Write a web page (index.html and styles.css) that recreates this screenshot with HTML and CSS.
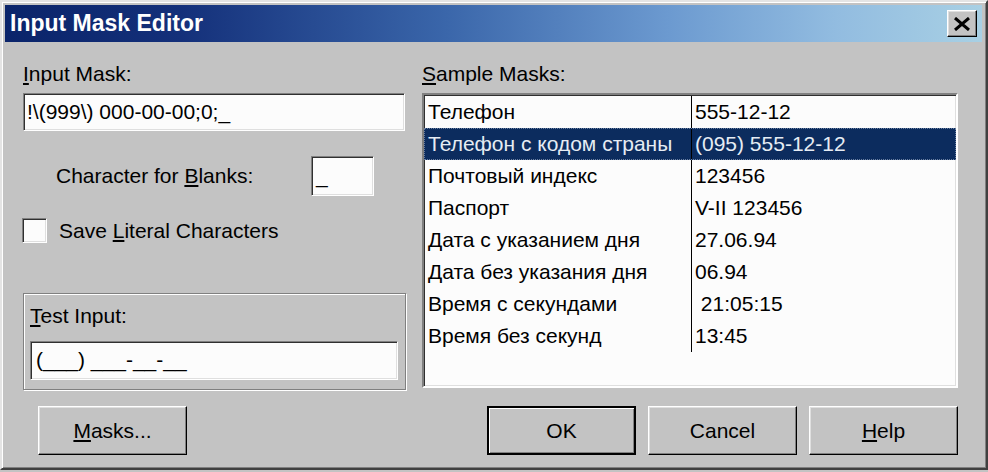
FILE: index.html
```html
<!DOCTYPE html>
<html>
<head>
<meta charset="utf-8">
<link rel="stylesheet" href="styles.css">
</head>
<body>
<div class="window">
  <div class="titlebar">
    <span class="title">Input Mask Editor</span>
    <button class="close" aria-label="Close">
      <svg width="18" height="14" viewBox="0 0 18 14"><path d="M2 1 L16 13 M16 1 L2 13" stroke="#000" stroke-width="3" fill="none"/></svg>
    </button>
  </div>
  <div class="content">
    <div class="left">
      <div class="label"><u>I</u>nput Mask:</div>
      <div class="field mask">!\(999\) 000-00-00;0;_</div>
      <div class="blanks">
        <span class="blanks-label">Character for <u>B</u>lanks:</span>
        <div class="field blank-box">_</div>
      </div>
      <div class="check-row">
        <span class="checkbox"></span>
        <span>Save <u>L</u>iteral Characters</span>
      </div>
      <div class="group">
        <div class="label"><u>T</u>est Input:</div>
        <div class="field test">(___) ___-__-__</div>
      </div>
    </div>
    <div class="right">
      <div class="label"><u>S</u>ample Masks:</div>
      <div class="list">
        <div class="row"><span class="c1">Телефон</span><span class="c2">555-12-12</span></div>
        <div class="row selected"><span class="c1">Телефон с кодом страны</span><span class="c2">(095) 555-12-12</span></div>
        <div class="row"><span class="c1">Почтовый индекс</span><span class="c2">123456</span></div>
        <div class="row"><span class="c1">Паспорт</span><span class="c2">V-II 123456</span></div>
        <div class="row"><span class="c1">Дата с указанием дня</span><span class="c2">27.06.94</span></div>
        <div class="row"><span class="c1">Дата без указания дня</span><span class="c2">06.94</span></div>
        <div class="row"><span class="c1">Время с секундами</span><span class="c2">&nbsp;21:05:15</span></div>
        <div class="row"><span class="c1">Время без секунд</span><span class="c2">13:45</span></div>
      </div>
    </div>
  </div>
  <div class="footer">
    <button class="btn"><u>M</u>asks...</button>
    <div class="actions">
      <button class="btn default">OK</button>
      <button class="btn">Cancel</button>
      <button class="btn"><u>H</u>elp</button>
    </div>
  </div>
</div>
</body>
</html>
```
FILE: styles.css
```css
html, body {
  margin: 0;
  padding: 0;
  background: #c3c3c3;
}
body {
  font-family: "Liberation Sans", Arial, sans-serif;
  font-size: 21px;
  color: #000;
}
.window {
  box-sizing: border-box;
  width: 988px;
  height: 470px;
  background: #c3c3c3;
  border-style: solid;
  border-width: 2px;
  border-color: #e4e4e4 #404040 #404040 #e4e4e4;
  box-shadow: inset 1px 1px #fff, inset -1px -1px #808080;
  padding: 3px 4px 3px 3px;
}
.titlebar {
  height: 37px;
  display: flex;
  align-items: center;
  justify-content: space-between;
  padding: 0 5px 0 5px;
  background: linear-gradient(to right, #0a246a 0%, #14307a 18%, #3a66aa 45%, #6c9ad0 68%, #92bce0 85%, #a8d0e4 100%);
}
.title {
  color: #fff;
  font-weight: bold;
  font-size: 23px;
  line-height: 37px;
}
.close {
  width: 30px;
  height: 27px;
  padding: 0;
  margin: 0;
  display: flex;
  align-items: center;
  justify-content: center;
  background: #c3c3c3;
  border-style: solid;
  border-width: 1px;
  border-color: #fff #000 #000 #fff;
  box-shadow: inset -1px -1px #808080, inset 1px 1px #dfdfdf;
}
.content {
  display: grid;
  grid-template-columns: 383px 536px;
  column-gap: 16px;
  padding: 20px 0 0 18px;
  height: 348px;
  box-sizing: border-box;
}
.label {
  height: 24px;
  line-height: 24px;
  margin-bottom: 7px;
  white-space: nowrap;
}
.field {
  box-sizing: border-box;
  background: #fcfcfc;
  border-style: solid;
  border-width: 1px;
  border-color: #808080 #fff #fff #808080;
  box-shadow: inset 1px 1px #303030, inset -1px -1px #dfdfdf;
  line-height: 24px;
  white-space: nowrap;
}
.mask {
  width: 382px;
  height: 38px;
  padding: 6px 3px 0;
}
.blanks {
  display: flex;
  align-items: center;
  margin-top: 25px;
}
.blanks-label {
  box-sizing: border-box;
  width: 288px;
  padding-left: 33px;
}
.blank-box {
  width: 63px;
  height: 40px;
  padding: 7px 4px 0;
}
.check-row {
  display: flex;
  align-items: center;
  gap: 12px;
  margin-top: 22px;
  margin-left: -1px;
  line-height: 24px;
}
.checkbox {
  box-sizing: border-box;
  width: 25px;
  height: 25px;
  background: #fcfcfc;
  border-style: solid;
  border-width: 1px;
  border-color: #808080 #fff #fff #808080;
  box-shadow: inset 1px 1px #303030, inset -1px -1px #dfdfdf;
}
.group {
  box-sizing: border-box;
  width: 383px;
  height: 97px;
  margin-top: 50px;
  padding: 10px 6px 0;
  border: 1px solid #808080;
  box-shadow: inset 1px 1px #fff, 1px 1px #fff;
}
.group .label {
  margin-bottom: 13px;
}
.test {
  width: 368px;
  height: 39px;
  padding: 6px 5px 0;
}
.list {
  box-sizing: border-box;
  width: 536px;
  height: 295px;
  padding-top: 1px;
  background: #fcfcfc;
  border-style: solid;
  border-width: 2px;
  border-color: #808080 #fff #fff #808080;
  box-shadow: inset 1px 1px #303030, inset -1px -1px #dfdfdf;
}
.row {
  display: flex;
  height: 32px;
  line-height: 32px;
  white-space: nowrap;
}
.c1 {
  box-sizing: border-box;
  width: 267px;
  padding-left: 4px;
  overflow: hidden;
}
.c2 {
  border-left: 1px solid #000;
  padding-left: 3px;
  flex: 1;
}
.row.selected {
  background: #0c2c5e;
  color: #e6ecf4;
  outline: 1px dotted #6a7fa0;
  outline-offset: -1px;
}
.footer {
  display: flex;
  justify-content: space-between;
  align-items: flex-start;
  padding: 16px 24px 0 33px;
}
.actions {
  display: flex;
  gap: 12px;
}
.btn {
  box-sizing: border-box;
  width: 149px;
  height: 49px;
  margin: 0;
  padding: 0;
  font-family: "Liberation Sans", Arial, sans-serif;
  font-size: 21px;
  color: #000;
  background: #c3c3c3;
  border-style: solid;
  border-width: 1px;
  border-color: #fff #000 #000 #fff;
  box-shadow: inset -1px -1px #808080, inset 1px 1px #dfdfdf;
}
.btn.default {
  border: 2px solid #000;
  box-shadow: inset 1px 1px #fff, inset -1px -1px #808080;
}
```
